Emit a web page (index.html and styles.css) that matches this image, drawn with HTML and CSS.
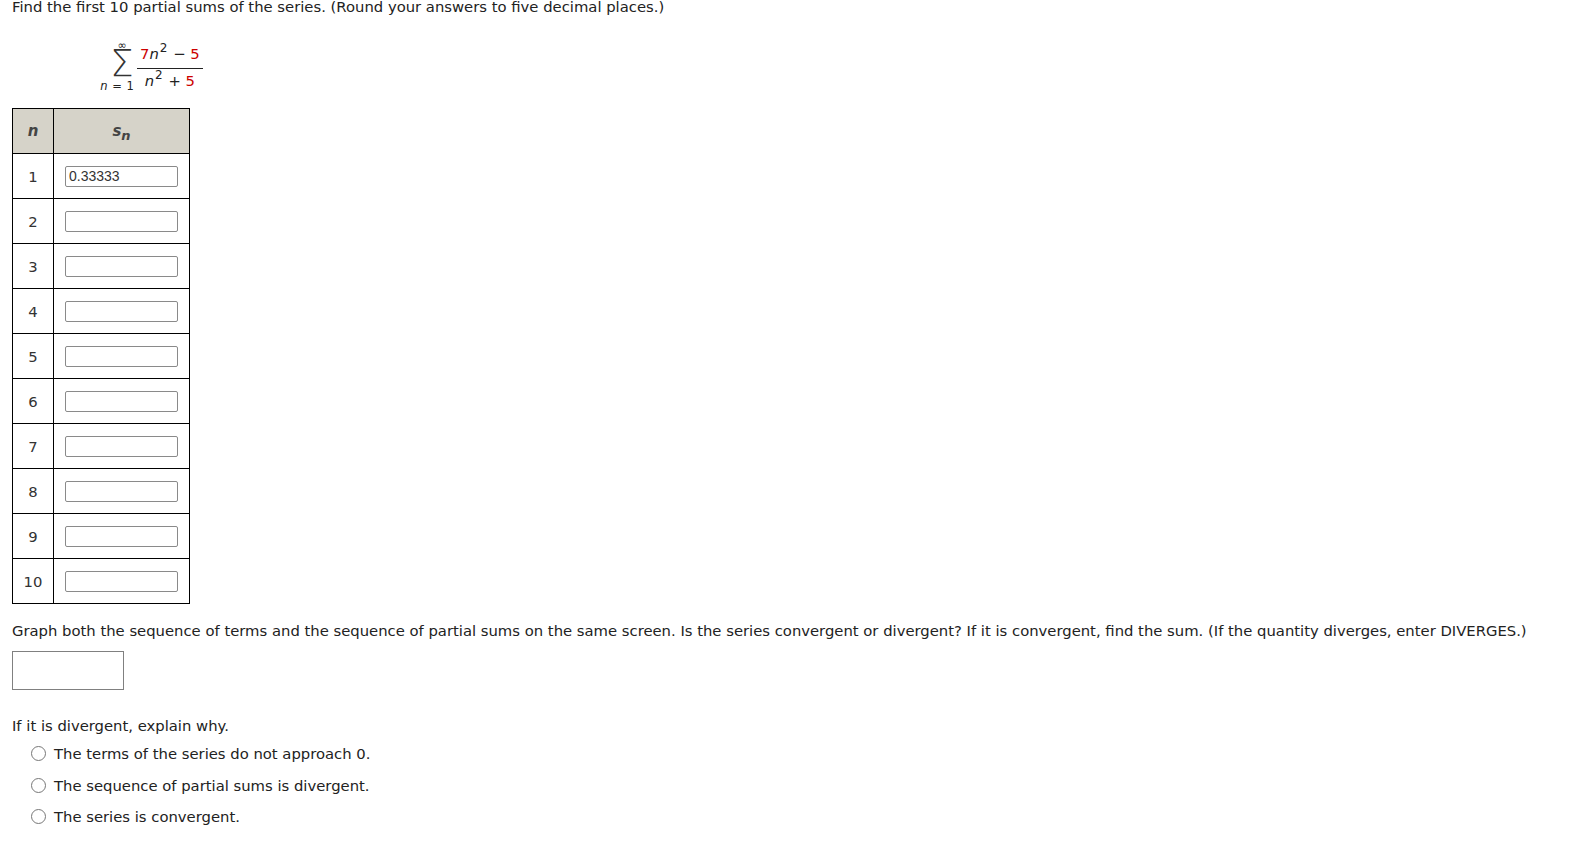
FILE: index.html
```html
<!DOCTYPE html>
<html>
<head>
<meta charset="utf-8">
<link rel="stylesheet" href="styles.css">
</head>
<body>
<div class="page">
  <p class="q">Find the first 10 partial sums of the series. (Round your answers to five decimal places.)</p>

  <div class="formula">
    <div class="sigma">
      <span class="inf">∞</span>
      <span class="sym">Σ</span>
      <span class="lim"><i>n</i> = 1</span>
    </div>
    <div class="frac">
      <span class="num"><span class="red">7</span><i>n</i><sup>2</sup> − <span class="red">5</span></span>
      <span class="den"><i>n</i><sup>2</sup> + <span class="red">5</span></span>
    </div>
  </div>

  <table class="sums">
    <thead>
      <tr><th class="ncol"><i>n</i></th><th class="scol"><i>s</i><sub><i>n</i></sub></th></tr>
    </thead>
    <tbody>
      <tr><td class="ncol">1</td><td class="scol"><input class="box" type="text" value="0.33333"></td></tr>
      <tr><td class="ncol">2</td><td class="scol"><input class="box" type="text"></td></tr>
      <tr><td class="ncol">3</td><td class="scol"><input class="box" type="text"></td></tr>
      <tr><td class="ncol">4</td><td class="scol"><input class="box" type="text"></td></tr>
      <tr><td class="ncol">5</td><td class="scol"><input class="box" type="text"></td></tr>
      <tr><td class="ncol">6</td><td class="scol"><input class="box" type="text"></td></tr>
      <tr><td class="ncol">7</td><td class="scol"><input class="box" type="text"></td></tr>
      <tr><td class="ncol">8</td><td class="scol"><input class="box" type="text"></td></tr>
      <tr><td class="ncol">9</td><td class="scol"><input class="box" type="text"></td></tr>
      <tr><td class="ncol">10</td><td class="scol"><input class="box" type="text"></td></tr>
    </tbody>
  </table>

  <p class="q2">Graph both the sequence of terms and the sequence of partial sums on the same screen. Is the series convergent or divergent? If it is convergent, find the sum. (If the quantity diverges, enter DIVERGES.)</p>

  <input class="answer" type="text">

  <p class="q3">If it is divergent, explain why.</p>
  <ul class="opts">
    <li><span class="radio"></span>The terms of the series do not approach 0.</li>
    <li><span class="radio"></span>The sequence of partial sums is divergent.</li>
    <li><span class="radio"></span>The series is convergent.</li>
  </ul>
</div>
</body>
</html>
```

FILE: styles.css
```css
html, body {
  margin: 0;
  padding: 0;
  background: #fff;
}
.page {
  padding: 0 12px;
  font-family: "DejaVu Sans", Verdana, sans-serif;
  font-size: 14.8px;
  color: #222;
}
.q {
  margin: -1px 0 0 0;
  line-height: 16px;
}
.formula {
  display: flex;
  align-items: flex-start;
  margin: 26px 0 0 86px;
  height: 58px;
}
.sigma {
  display: flex;
  flex-direction: column;
  align-items: center;
  width: 38px;
}
.inf {
  display: block;
  font-size: 11px;
  line-height: 9px;
  height: 9px;
  margin-left: 10px;
}
.sym {
  display: block;
  font-size: 37px;
  font-weight: 200;
  line-height: 28px;
  height: 28px;
  margin-left: 10px;
  color: #333;
}
.lim {
  display: block;
  font-size: 11.5px;
  line-height: 12px;
  margin-top: 2px;
  word-spacing: 1px;
}
.frac {
  display: flex;
  flex-direction: column;
  align-items: center;
  margin: 3px 0 0 1px;
}
.num {
  padding: 0 3px 4px 3px;
  border-bottom: 1px solid #222;
  line-height: 20px;
}
.den {
  line-height: 20px;
  padding-top: 2px;
}
.frac sup {
  font-size: 12px;
  vertical-align: 7px;
  line-height: 0;
  margin: 0 1px 0 1px;
}
.red {
  color: #cc0000;
}
.sums {
  border-collapse: collapse;
  margin-top: 9px;
}
.sums th, .sums td {
  border: 1px solid #000;
  height: 44px;
  padding: 0;
  text-align: center;
}
.sums th {
  background: #d6d3c9;
  color: #444;
  font-weight: bold;
  font-size: 15px;
}
.ncol {
  width: 40px;
}
.scol {
  width: 135px;
}
.sums td.ncol {
  color: #333;
}
.sums sub {
  font-size: 13px;
  vertical-align: -4px;
  line-height: 0;
}
.box {
  display: block;
  box-sizing: border-box;
  width: 113px;
  height: 21px;
  margin: 0 0 0 11px;
  border: 1px solid #8a8a8a;
  border-radius: 2px;
  padding: 0 3px;
  font-family: "Liberation Sans", Arial, sans-serif;
  font-size: 14px;
  color: #333;
  background: #fff;
}
.q2 {
  margin: 19px 0 0 0;
  line-height: 16px;
}
.answer {
  display: block;
  box-sizing: border-box;
  width: 112px;
  height: 39px;
  margin-top: 12px;
  border: 1px solid #808080;
  border-radius: 0;
  background: #fff;
}
.q3 {
  margin: 28px 0 0 0;
  line-height: 16px;
}
.opts {
  list-style: none;
  margin: 4px 0 0 0;
  padding: 0 0 0 19px;
}
.opts li {
  display: flex;
  align-items: center;
  height: 31.5px;
}
.radio {
  box-sizing: border-box;
  width: 15px;
  height: 15px;
  border: 1px solid #777;
  border-radius: 50%;
  margin-right: 8px;
  background: #fff;
}
```
